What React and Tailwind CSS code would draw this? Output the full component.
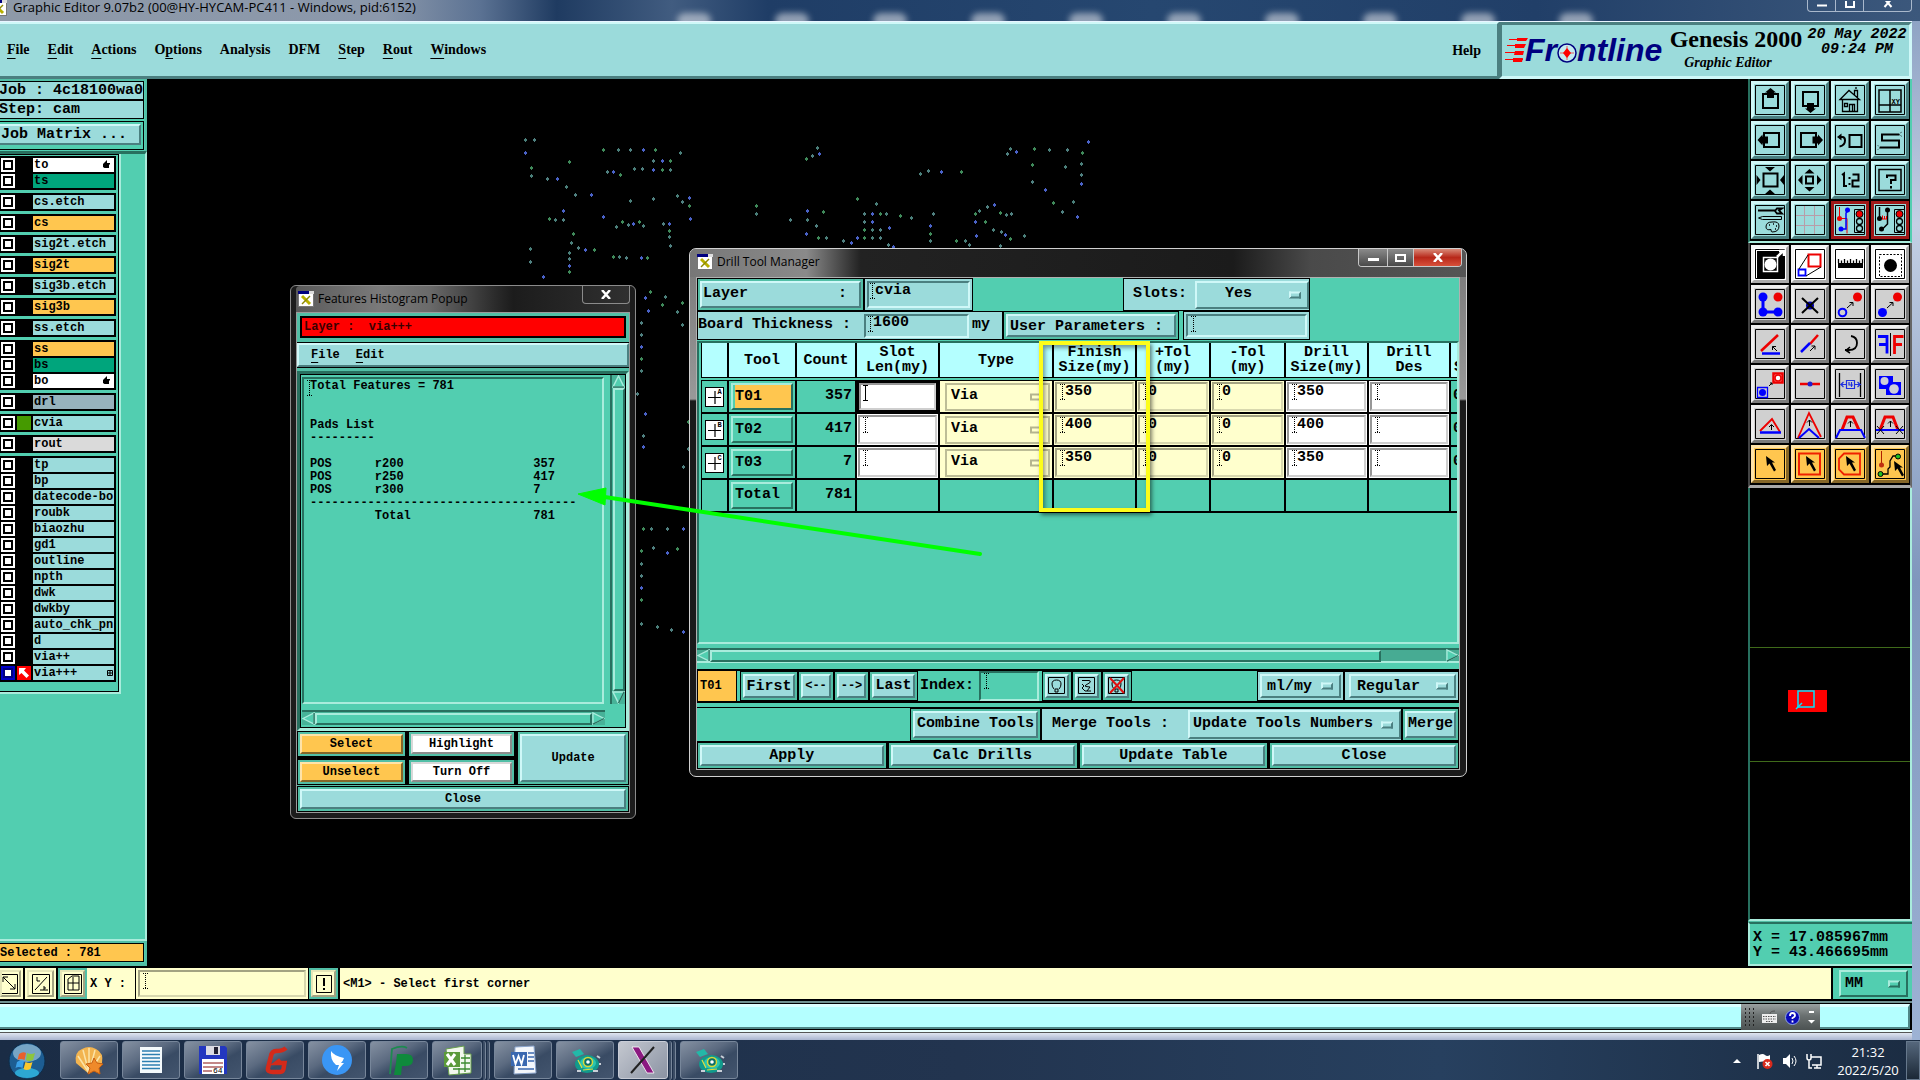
import React from "react";

const MONO = "font-['Liberation_Mono',monospace]";
const AQUA_UP = "bg-[#9bdbdb] border-2 border-t-[#cff8f8] border-l-[#cff8f8] border-b-[#4b7f80] border-r-[#4b7f80]";
const AQUA_IN = "bg-[#9bdbdb] border-2 border-t-[#4b7f80] border-l-[#4b7f80] border-b-[#cff8f8] border-r-[#cff8f8]";
const TEAL_UP = "bg-[#52ceb0] border-2 border-t-[#a9ecdc] border-l-[#a9ecdc] border-b-[#28705f] border-r-[#28705f]";
const TEAL_IN = "bg-[#52ceb0] border-2 border-t-[#28705f] border-l-[#28705f] border-b-[#a9ecdc] border-r-[#a9ecdc]";
const AMBER_UP = "bg-[#ffc64f] border-2 border-t-[#ffe3a8] border-l-[#ffe3a8] border-b-[#856628] border-r-[#856628]";
const WHITE_UP = "bg-white border-2 border-t-[#d8d8d8] border-l-[#d8d8d8] border-b-[#8c8c8c] border-r-[#8c8c8c]";
const CREAM_IN = "bg-[#ffffcd] border-2 border-t-[#a3a382] border-l-[#a3a382] border-b-[#d8d8ae] border-r-[#d8d8ae]";
const WHITE_IN = "bg-white border-2 border-t-[#979797] border-l-[#979797] border-b-[#cfcfcf] border-r-[#cfcfcf]";

/* ---------- small shared pieces ---------- */

function WinIcon() {
  return (
    <svg width="16" height="16" viewBox="0 0 16 16" className="shrink-0">
      <rect x="0.5" y="0.5" width="15" height="15" fill="#fff" stroke="#777" />
      <rect x="0" y="0" width="11" height="3" fill="#00007f" />
      <rect x="11" y="0" width="5" height="3" fill="#ddd" />
      <path d="M4 5l8 8" stroke="#b8b000" strokeWidth="3" />
      <path d="M12 5l-8 8" stroke="#8c8800" strokeWidth="1.4" />
    </svg>
  );
}

function Caret({ solid }) {
  return (
    <svg width="5" height="16" viewBox="0 0 5 16" className="shrink-0">
      <path
        d="M0 .5h5M2.5 0v16M0 15.5h5"
        stroke="#000"
        fill="none"
        strokeDasharray={solid ? undefined : "1 1"}
      />
    </svg>
  );
}

function Knob({ tone = "aqua" }) {
  const tones = {
    aqua: "border-t-[#cff8f8] border-l-[#cff8f8] border-b-[#4b7f80] border-r-[#4b7f80]",
    teal: "border-t-[#a9ecdc] border-l-[#a9ecdc] border-b-[#28705f] border-r-[#28705f]",
    cream: "border-[#b5b58f]",
  };
  return <span className={`pointer-events-none absolute right-[6px] top-1/2 h-[7px] w-[12px] -translate-y-1/2 border-2 ${tones[tone]}`} />;
}

function Picker({ label, value, className, tone, pad = "pl-2" }) {
  return (
    <span className={`relative flex ${className}`}>
      <select aria-label={label} defaultValue={value} className={`w-full appearance-none bg-transparent outline-none ${pad}`}>
        <option>{value}</option>
      </select>
      <Knob tone={tone} />
    </span>
  );
}

function Field({ label, value = "", className, solid }) {
  return (
    <label className={`flex min-w-0 items-start ${className}`}>
      <Caret solid={solid} />
      <input aria-label={label} defaultValue={value} className="h-[16px] w-full min-w-0 bg-transparent outline-none" />
    </label>
  );
}

function Arrow({ dir }) {
  const d = {
    up: ["M7 1L13 13H1Z", "M13 13H1"],
    down: ["M7 13L1 1H13Z", "M7 13L13 1"],
    left: ["M1 7L13 1V13Z", "M13 1V13"],
    right: ["M13 7L1 1V13Z", "M13 7L1 13"],
  }[dir];
  return (
    <button aria-label={`Scroll ${dir}`} className="h-[13px] w-[13px] shrink-0">
      <svg viewBox="0 0 14 14" className="h-full w-full">
        <path d={d[0]} fill="#52ceb0" stroke="#a9ecdc" strokeWidth="1.5" />
        <path d={d[1]} stroke="#28705f" strokeWidth="1.5" />
      </svg>
    </button>
  );
}

/* ---------- header ---------- */

function TitleBar() {
  return (
    <div className="flex h-[21px] items-start justify-between overflow-hidden bg-[linear-gradient(90deg,#8e99a8_0%,#8b98ab_20%,#5b7293_25%,#1f3b61_29%,#415c80_35%,#1f3d66_40%,#264770_60%,#213f68_80%,#3c587c_100%)]">
      <div className="flex items-start gap-1 font-['Open_Sans','Noto_Sans',sans-serif] text-[13px] leading-[15px] text-black">
        <span className="-ml-[9px]"><WinIcon /></span>
        <span className="whitespace-nowrap pl-[2px]">Graphic Editor 9.07b2 (00@HY-HYCAM-PC411 - Windows, pid:6152)</span>
      </div>
      <div className="hidden flex-1 items-end justify-center gap-16 self-stretch pl-12 lg:flex">
        {[0, 1, 2, 3, 4, 5, 6, 7, 8, 9].map((i) => (
          <span key={i} className="-mb-2 h-[16px] w-[34px] rounded-full bg-[#dcdfe6]/60 blur-[3px]" />
        ))}
      </div>
      <div className="mr-2 flex h-[12px] rounded-b-[4px] border border-t-0 border-[#a9b8cc] text-white">
        {["Minimize", "Maximize", "Close"].map((n, i) => (
          <button key={n} aria-label={n} className={`flex h-full items-center justify-center ${i === 2 ? "w-[47px]" : "w-[28px] border-r border-[#a9b8cc]"}`}>
            <svg width="12" height="10" viewBox="0 0 12 10" fill="none" stroke="#fff" strokeWidth="2">
              <path d={["M1 4.5h10", "M2 0v6h8v-6", "M2.5 -2l7 8M9.500 -2l-7 8"][i]} />
            </svg>
          </button>
        ))}
      </div>
    </div>
  );
}

function Logo() {
  return (
    <div className="flex shrink-0 items-center" aria-label="Frontline" role="img">
      <svg width="162" height="42" viewBox="0 -8 162 42">
        <g stroke="#f00" strokeWidth="1">
          <path d="M4 2.500h18M2 8.500h18M0 15.500h18M0 22.500h18" />
        </g>
        <g fill="#f00">
          <path d="M12 1h11l-2 3h-9zM10 7h11l-2 4h-9zM10 14h9l-1 4h-9zM8 21h10l-1 4h-9z" />
        </g>
        <text x="20" y="24" fontFamily="Liberation Sans" fontWeight="bold" fontStyle="italic" fontSize="32" fill="#000080">Fr</text>
        <circle cx="62" cy="16" r="9" fill="#c4ecf0" stroke="#000080" strokeWidth="1.500" />
        <path d="M62 11l4 5-4 5-4-5z" fill="#f00" />
        <path d="M62 9v14M55 16h14" stroke="#f00" strokeWidth="0.6" />
        <text x="72" y="24" fontFamily="Liberation Sans" fontWeight="bold" fontStyle="italic" fontSize="32" fill="#000080">ntline</text>
      </svg>
    </div>
  );
}

const MENU = [["F", "ile"], ["E", "dit"], ["A", "ctions"], ["", "Options", 1], ["", "Analysis"], ["", "DFM"], ["S", "tep"], ["R", "out"], ["W", "indows"]];

function Header() {
  return (
    <header className="flex h-[58px] border-t border-[#e8f4ff] bg-[#9bdbdb] font-['Liberation_Serif',serif] text-black">
      <nav className="flex flex-1 items-center justify-between border-2 border-b-[3px] border-l-0 border-t-[#cff8f8] border-r-[#4b7f80] border-b-[#4b7f80] pl-[7px] pr-[16px] text-[14px] font-bold">
        <div className="flex gap-[18px]">
          {MENU.map(([u, rest]) => (
            <button key={u + rest} className="leading-5">
              {u ? <span className="underline underline-offset-4">{u}</span> : null}
              {rest === "Options" ? <>O<span className="underline underline-offset-4">p</span>tions</> : rest}
            </button>
          ))}
        </div>
        <button>Help</button>
      </nav>
      <div className="flex w-[413px] border-[3px] border-t-[#4b7f80] border-l-[#4b7f80] border-b-[#cff8f8] border-r-[#cff8f8] pl-[3px]">
        <div className="pt-1"><Logo /></div>
        <div className="flex w-[138px] shrink-0 flex-col items-center">
          <h1 className="whitespace-nowrap text-[24px] font-bold leading-[28px]">Genesis 2000</h1>
          <p className="whitespace-nowrap pr-4 text-[14px] font-bold italic leading-5">Graphic Editor</p>
        </div>
        <div className={`${MONO} flex-1 whitespace-nowrap pt-[2px] text-center text-[15px] font-bold italic leading-[15px]`}>
          <p>20 May 2022</p>
          <p>09:24 PM</p>
        </div>
      </div>
    </header>
  );
}

/* ---------- left column ---------- */

const C = { w: "bg-white", g: "bg-[#00a57c]", a: "bg-[#9bdbdb]", o: "bg-[#ffc64f]", d: "bg-[#97b3bd]", r: "bg-[#dadada]" };
const GROUPS = [
  [["to", C.w, "hand"], ["ts", C.g]],
  [["cs.etch", C.a]],
  [["cs", C.o]],
  [["sig2t.etch", C.a]],
  [["sig2t", C.o]],
  [["sig3b.etch", C.a]],
  [["sig3b", C.o]],
  [["ss.etch", C.a]],
  [["ss", C.o], ["bs", C.g], ["bo", C.w, "hand"]],
  [["drl", C.d]],
  [["cvia", C.a, "green"]],
  [["rout", C.r]],
  [["tp", C.a], ["bp", C.a], ["datecode-bo", C.a], ["roubk", C.a], ["biaozhu", C.a], ["gd1", C.a], ["outline", C.a], ["npth", C.a], ["dwk", C.a], ["dwkby", C.a], ["auto_chk_pnl", C.a], ["d", C.a], ["via++", C.a], ["via+++", C.a, "work"]],
];

function LayerRow({ name, bg, mark }) {
  const on = mark === "work";
  return (
    <li className="flex h-[14px]">
      <label className="flex w-[14px] shrink-0">
        <input
          type="checkbox"
          aria-label={`Show ${name}`}
          className={`h-[14px] w-[14px] appearance-none border-2 ${on ? "border-[#0000c8] bg-white outline outline-2 -outline-offset-4 outline-[#000080]" : "border-white bg-white outline outline-2 -outline-offset-4 outline-black"}`}
        />
      </label>
      <span className="flex w-[18px] shrink-0 items-center justify-center">
        {mark === "green" ? <span className="h-full w-[14px] bg-[#459a00]" /> : null}
        {on ? (
          <svg width="14" height="14" viewBox="0 0 14 14"><path d="M0 0h14v14H0z" fill="#f00" /><path d="M2 2h7L7 4.500l5 5-2.500 2.500-5-5L2 9z" fill="#fff" /></svg>
        ) : null}
      </span>
      <button className={`${bg} flex min-w-0 flex-1 items-center justify-between overflow-hidden whitespace-nowrap pl-px text-[12px] leading-[14px]`}>
        <span>{name}</span>
        {mark === "hand" ? (
          <svg width="8" height="9" viewBox="0 0 8 9" className="mr-1 shrink-0"><path d="M1 4l4-4v3h3v1.500H7V8H2.500L1 7z" /></svg>
        ) : null}
        {on ? (
          <svg width="6" height="6" viewBox="0 0 6 6" className="mr-px shrink-0" fill="none" stroke="#000"><path d="M.5.5h5v5h-5zM3 0v6M0 3h6" /></svg>
        ) : null}
      </button>
    </li>
  );
}

function Sidebar() {
  return (
    <aside className={`${MONO} flex w-[147px] shrink-0 flex-col bg-[#52ceb0] font-bold text-black`}>
      <div className="border-r-2 border-t-2 border-[#52bfa6] pr-px pb-px text-[15px]">
        <div className="h-[19px] overflow-hidden whitespace-nowrap border border-l-0 border-black bg-[#9bdbdb] leading-[18px]"><span className="-ml-px">Job : 4c18100wa0</span></div>
        <div className="h-[19px] overflow-hidden whitespace-nowrap border border-l-0 border-black bg-[#9bdbdb] leading-[18px]"><span className="-ml-px">Step: cam</span></div>
        <div className="mt-[2px] border border-l-0 border-black p-[2px] pl-0">
          <button className={`${AQUA_UP} h-[21px] w-full border-l-0 pl-[1px] text-left leading-[18px]`}>Job Matrix ...</button>
        </div>
      </div>
      <div className="flex-1 border-b-2 border-r-2 border-t-[3px] border-b-[#a9ecdc] border-r-[#a9ecdc] border-t-[#28705f]">
        <div className="mr-[24px] border-b-2 border-r-2 border-b-[#a9ecdc] border-r-[#a9ecdc]">
          <ul className="flex flex-col gap-[3px] border-b border-r border-t border-black pb-[9px] pr-[2px] pt-px">
            {GROUPS.map((g) => (
              <li key={g[0][0]}>
                <ul className="flex flex-col gap-[2px] bg-black py-[2px] pl-px pr-[2px]">
                  {g.map(([n, bg, m]) => <LayerRow key={n} name={n} bg={bg} mark={m} />)}
                </ul>
              </li>
            ))}
          </ul>
        </div>
      </div>
      <div className="border-b-[3px] border-r-2 border-t-2 border-[#52bfa6] pb-px pr-px">
        <p className="h-[19px] border border-l-0 border-black bg-[#ffc64f] text-[12px] leading-[19px]">Selected : 781</p>
      </div>
    </aside>
  );
}

/* ---------- right tool palette: glyphs drawn on a 38px grid ---------- */

const B = "#0000ff";
const R = "#ee0000";
const K = "#000";
const light = (
  <>
    <path d="M23.500 8.500h10v23h-10z" fill="#9bdbdb" stroke={K} />
    <circle cx="28.500" cy="13" r="3.500" fill={R} stroke={K} />
    <circle cx="28.500" cy="20.500" r="3" fill="none" stroke={K} strokeWidth="1.300" />
    <circle cx="28.500" cy="27.500" r="3" fill="none" stroke={K} strokeWidth="1.300" />
  </>
);
const pointer = "M0 0l1 10 2.500-2.500 4.500 8 2-1.500-4-7.500h3z";

const TOOLS_TOP = [
  ["Pan up", <><path d="M12 13h15v14H12z" fill="none" stroke={K} strokeWidth="2" /><path d="M19.500 7l5.500 4.500h-2V17h-7v-5.500h-2z" /></>],
  ["Pan down", <><path d="M12 11h15v14H12z" fill="none" stroke={K} strokeWidth="2" /><path d="M19.500 32l5.500-4.500h-2V22h-7v5.500h-2z" /></>],
  ["Home", <path d="M9 18.500l9-9 10.500 9zM11.500 18.500v12h15v-12M18.500 30.500v-7h5v7M13.500 22.500h3v3h-3zM23.500 14V9.500h3V17M25 8V6M21.500 24v6" fill="none" stroke={K} strokeWidth="1.300" />],
  ["Panel view", <><path d="M8 9h22v22H8zM19 9v22M8 24h22" fill="none" stroke={K} strokeWidth="1.500" /><text x="20.500" y="22.500" fontSize="7" fontFamily="Liberation Mono" fontWeight="bold">XY</text></>],
  ["Pan left", <><path d="M13 12h15v14H13z" fill="none" stroke={K} strokeWidth="2" /><path d="M6.500 19l5-5.500v2H17v7h-5.500v2z" /></>],
  ["Pan right", <><path d="M10 12h15v14H10z" fill="none" stroke={K} strokeWidth="2" /><path d="M32 19l-5-5.500v2h-5.500v7H27v2z" /></>],
  ["Previous view", <><path d="M18.500 14h12v12h-12z" fill="none" stroke={K} strokeWidth="2" /><path d="M9 16h2.500q2.500 0 2.500 3.500 0 5-5.500 6" fill="none" stroke={K} strokeWidth="2" /><path d="M6 16l4.500-3.500v7z" /></>],
  ["Serpentine", <><path d="M28 13.500H11v6h17v7H9" fill="none" stroke={K} strokeWidth="2" /><path d="M28 13.500l3-3M28 13.500l3 2M9 26.500l-2-2M9 26.500l-2 2" stroke={K} strokeWidth="1" strokeDasharray="1 1" /></>],
  ["Zoom in", <><path d="M12.500 12.500h14v13h-14z" fill="none" stroke={K} strokeWidth="2" /><path d="M14 6h10l-5 4.500zM14 33h10l-5-4.500zM5.500 14v10l4-5zM33 14v10l-4-5z" /></>],
  ["Zoom out", <><path d="M15 15.500h7v7h-7z" fill="none" stroke={K} strokeWidth="2" /><path d="M13.500 12.500h10l-5-4.500zM13.500 26h10l-5 4.500zM11.500 14v10l-4.500-5zM26 14v10l4.500-5z" /></>],
  ["Scale", <path d="M11 14l2-1.500V26M15 26v-2M18.500 16v2M18.500 22v2M21.500 13.500h6v6h-6v6h7" fill="none" stroke={K} strokeWidth="2" />],
  ["Help on item", <><path d="M8 8.500h22v21H8z" fill="none" stroke={K} strokeWidth="1.500" /><path d="M16 17v-2.500h8.500V19H20v4M20 25v2.500" fill="none" stroke={K} strokeWidth="2" /></>],
  ["Display setup", <><path d="M7 9.500h17M26 7.500h5l-3 2 3 3h-5l-2-2.500z" stroke={K} strokeWidth="1.800" fill="none" /><path d="M7.500 17l4-1.500h19v3h-19z" fill="none" stroke={K} /><path d="M15 26q0-5 6-5 7-1 7 4 0 6-7 6-1 0-1-2.500-5 1-5-2.500z" fill="none" stroke={K} /><path d="M18 24h1M22 23h1M25 25h1M24 28h1" stroke={K} strokeWidth="1.500" /></>],
  ["Grid", <path d="M13.500 5v28M23.500 5v28M5 14.500h28M5 24.500h28" stroke="#b89ca8" fill="none" />],
  ["Control one", <>{light}<path d="M8.500 6v11M10 17.500h6v15" stroke={R} fill="none" /><circle cx="8.500" cy="17.500" r="2.500" fill={R} /><path d="M18 9l-3 3v16h-5" stroke={B} fill="none" strokeWidth="1.500" /><circle cx="16.500" cy="9" r="2.500" fill={B} /><circle cx="10" cy="28" r="2.500" fill={B} /></>, "red"],
  ["Control two", <>{light}<path d="M8.500 6v11M16.500 9v14l-5 5" stroke={K} fill="none" strokeWidth="1.500" /><circle cx="8.500" cy="17.500" r="2.500" /><circle cx="16.500" cy="9" r="2.500" /><circle cx="10.500" cy="28" r="2.500" /><path d="M11.500 14.500v4M11.500 18h4.500M13.500 15v3M15.500 15v3" stroke={R} /></>, "red"],
];

const TOOLS_BOTTOM = [
  ["Magnify", <><path d="M6 6h27v27H6z" /><path d="M12.500 12.500h14v14h-14z" fill={K} stroke="#fff" strokeWidth="1.500" /><circle cx="19.500" cy="19.500" r="6" fill="#fff" /><path d="M26 12l6-6M28 6h5v5" stroke="#fff" strokeWidth="2.500" fill="none" /></>, "white"],
  ["Enlarge", <><path d="M17.500 9.500h12v12h-12z" fill="none" stroke={R} strokeWidth="2" /><path d="M7.500 24.500h7v6h-7z" fill="none" stroke={B} strokeWidth="1.800" /><path d="M8 24l9-14M15 31l15-9" stroke={K} /></>, "white"],
  ["Measure", <><path d="M7 18h25v5H7z" /><path d="M7.500 14v4M10.500 15.500v3M13.500 14v4M16.500 15.500v3M19.500 14v4M22.500 15.500v3M25.500 14v4M28.500 15.500v3M31.500 14v4" stroke={K} strokeWidth="1.300" /></>, "white"],
  ["Feature select", <><path d="M8.500 9.500h22v22h-22z" fill="none" stroke={K} strokeDasharray="2 1.500" /><circle cx="19.500" cy="20.500" r="6.500" /></>, "white"],
  ["Net", <><path d="M12 12v15h15" fill="none" stroke={B} strokeWidth="3" /><circle cx="12" cy="12" r="4.500" fill={B} /><circle cx="12" cy="27" r="4.500" fill={B} /><circle cx="27" cy="27" r="4.500" fill={B} /><circle cx="27" cy="12" r="4.500" fill={R} /></>],
  ["Delete", <><circle cx="19" cy="20.500" r="4" fill="#0000b0" /><path d="M11 13l16 15M27 13L11 28" stroke={K} strokeWidth="2" /></>],
  ["Copy", <><circle cx="11.500" cy="27.500" r="3.800" fill="none" stroke={B} strokeWidth="2" /><circle cx="26.500" cy="12" r="4.500" fill={R} /><path d="M16 23l6-5.500M22 21v-3.500h-3.500" fill="none" stroke={K} /></>],
  ["Move", <><circle cx="11.500" cy="27.500" r="4.500" fill={B} /><circle cx="26.500" cy="12" r="4.500" fill={R} /><path d="M16 23l6-5.500M22 21v-3.500h-3.500" fill="none" stroke={K} /></>],
  ["Rotate", <><path d="M10 26L27 10" stroke={R} strokeWidth="2.500" /><path d="M11 28.500h18" stroke={B} strokeWidth="2.500" /><path d="M26 26l-4.500-4.500M21.500 25v-3.500h3.500" fill="none" stroke={K} /></>],
  ["Stretch line", <><path d="M19 19l8-9" stroke={R} strokeWidth="2.500" /><path d="M10 27l9-9" stroke={B} strokeWidth="2.500" /><path d="M19 26l5-5M24 24.500V21h-3.500" fill="none" stroke={K} /></>],
  ["Undo", <><path d="M20 11q6 1 6 7 0 7-8 7h-4" fill="none" stroke={K} strokeWidth="1.800" /><path d="M19 22l-4 3.500 4 2.500" fill="none" stroke={K} strokeWidth="1.500" /></>],
  ["Mirror", <><path d="M7 11.500h9v17M8 19.500h8" fill="none" stroke={B} strokeWidth="2.800" /><path d="M23.500 29v-17.500h9M24 19.500h7" fill="none" stroke={R} strokeWidth="2.800" /><path d="M19.500 8v23" stroke={K} /></>],
  ["Array", <><path d="M22.500 8.500h9v9h-9z" fill="#fff" stroke={R} strokeWidth="2.500" /><circle cx="27" cy="13" r="3" fill="#fff" stroke={R} strokeWidth="1.500" /><path d="M6.500 22.500h10v10h-10z" fill="none" stroke={B} strokeWidth="1.300" /><circle cx="11.500" cy="27.500" r="3.500" fill={B} /><path d="M18 21l3-3M21 20v-2h-2" stroke={K} fill="none" /></>],
  ["Join", <><path d="M9 19h20" stroke={R} strokeWidth="2.500" /><circle cx="19" cy="19" r="2.500" fill="#2020d0" /></>],
  ["Resize by", <><path d="M8.500 8v24M29.500 8v24" stroke={K} strokeWidth="1.300" /><path d="M15.500 15.500h8v8h-8zM15 19.500h-5l2.500-2.500M10 19.500l2.500 2.500M24 19.500h5L26.500 17M29 19.500L26.500 22M18 17v3h4M20.500 17v5" fill="none" stroke="#2030e0" strokeWidth="1.200" /></>],
  ["Fill", <><path d="M8 11h14v6h8v13H15v-6H8z" fill={B} /><circle cx="13.500" cy="16" r="4" fill="#cfcfd8" /><circle cx="23" cy="24" r="4.800" fill="#cfcfd8" /></>],
  ["Corner", <><path d="M9 26l12-12 8 13" fill="none" stroke={R} strokeWidth="1.800" /><path d="M9 27.500h21" stroke={B} strokeWidth="2.500" /><path d="M20.500 25v-5M18 22l2.500-2.500L23 22" fill="none" stroke={K} /></>],
  ["Tall corner", <><path d="M7 33L18 8l12 24" fill="none" stroke={R} strokeWidth="1.800" /><path d="M8 33l10-9 10 9" fill="none" stroke={B} strokeWidth="2" /><path d="M18.500 21v-6M16 17.500l2.500-2.500 2.500 2.500" fill="none" stroke={K} /></>],
  ["Trapezoid", <><path d="M11 25l5-13h6l6 13" fill="none" stroke={R} strokeWidth="3" /><path d="M5 33l4-8h21l4 8" fill="none" stroke={B} strokeWidth="2" /><path d="M19.500 22v-6M17 18.500l2.500-2.500 2.500 2.500" fill="none" stroke={K} /></>],
  ["Trapezoid cut", <><path d="M9 25l5-13h8l5 13" fill="none" stroke={R} strokeWidth="3" /><path d="M5 25h28" stroke={B} strokeWidth="2" /><path d="M6 21l7 8M13 21l-7 8M25 21l7 8M32 21l-7 8M19.500 22v-6M17 18.500l2.500-2.500 2.500 2.500" fill="none" stroke={K} /></>],
  ["Select single", <path d={pointer} transform="translate(15 11)" />, "amber"],
  ["Select window", <><path d="M8 8.500h21v21H8z" fill="none" stroke="#f02000" strokeWidth="2" /><path d={pointer} transform="translate(15 11)" /></>, "amber"],
  ["Select polygon", <><path d="M13 8.500h16v21H13l-5-5v-11z" fill="none" stroke="#f02000" strokeWidth="1.800" /><path d={pointer} transform="translate(15 11)" /></>, "amber"],
  ["Select net", <><path d="M10.500 6v12" stroke="#b02000" /><circle cx="10.500" cy="20" r="2.500" fill="#c03010" /><path d="M10 29h7v-5l2-2v-6l3-5h5" fill="none" stroke={K} strokeWidth="1.300" /><circle cx="27" cy="11.500" r="2.500" fill="#20c020" stroke={K} /><circle cx="9.500" cy="29" r="2.500" fill="#20c020" stroke={K} /><path d={pointer} transform="translate(23 16)" /></>, "amber"],
];

const TOOL_TONES = {
  aqua: "bg-[#9bdbdb] border-t-[#cff8f8] border-l-[#cff8f8] border-b-[#4b7f80] border-r-[#4b7f80]",
  gray: "bg-[#d0d0d0] border-t-[#eeeeee] border-l-[#eeeeee] border-b-[#7b7b7b] border-r-[#7b7b7b]",
  white: "bg-white border-t-[#f4f4f4] border-l-[#f4f4f4] border-b-[#a9a9a9] border-r-[#a9a9a9]",
  amber: "bg-[#ffc64f] border-t-[#ffe3a8] border-l-[#ffe3a8] border-b-[#856628] border-r-[#856628]",
  red: "bg-[#9bdbdb] border-[#a01818]",
};

function ToolGrid({ tools, tone, className }) {
  return (
    <div className={`grid grid-cols-4 gap-[2px] px-px pt-[2px] ${className}`}>
      {tools.map(([name, art, t]) => (
        <button key={name} aria-label={name} className={`h-[38px] w-[38px] border-[3px] ${TOOL_TONES[t || tone]}`}>
          <svg viewBox="3 3 32 32" className="h-full w-full">
            <path d="M4.500 4.500h29v29h-29z" fill="none" stroke={K} />
            {art}
          </svg>
        </button>
      ))}
    </div>
  );
}

function RightPanel() {
  return (
    <aside className="flex w-[164px] shrink-0 flex-col bg-[#52bfa6]">
      <div className="border-b-2 border-l-2 border-r-2 border-b-[#a9ecdc] border-l-[#28705f] border-r-[#52ceb0]">
        <ToolGrid tools={TOOLS_TOP} tone="aqua" className="bg-black pb-[2px]" />
      </div>
      <div className="border-b-[3px] border-l-2 border-r-2 border-b-[#a8a8a8] border-l-[#444] border-r-[#666]">
        <ToolGrid tools={TOOLS_BOTTOM} tone="gray" className="bg-black pb-[2px]" />
      </div>
      <div className="flex flex-1 flex-col border-b-2 border-l-2 border-r-2 border-b-[#a9ecdc] border-l-[#28705f] border-r-[#a9ecdc] bg-black">
        <div className="flex-[160]" />
        <div className="flex flex-[115] items-center border-y border-[#3f6a1a]">
          <svg viewBox="0 0 160 40" className="w-full">
            <rect x="38" y="6" width="39" height="22" fill="#f00" />
            <rect x="48" y="7" width="16" height="16" fill="none" stroke="#00e5ff" strokeWidth="1.500" />
            <path d="M46 25l6-6" stroke="#00e5ff" strokeWidth="1.500" />
          </svg>
        </div>
        <div className="flex-[158]" />
      </div>
      <div className={`${MONO} mt-px h-[44px] border-b-2 border-l-2 border-t-2 border-b-[#a9ecdc] border-l-[#a9ecdc] border-t-[#28705f] bg-[#52ceb0] pl-[3px] pt-[6px] text-[15px] font-bold leading-[15px]`}>
        <p>X = 17.085967mm</p>
        <p>Y = 43.466695mm</p>
      </div>
    </aside>
  );
}

/* ---------- canvas ---------- */

const DOTS = [
  [378, 23], [387, 23], [378, 36], [384, 51], [384, 59], [400, 62], [410, 62], [422, 45], [419, 70], [428, 78], [444, 78], [456, 33], [471, 33], [483, 33], [496, 33], [508, 33], [533, 36],
  [506, 44], [515, 44], [523, 44], [487, 52], [495, 52], [506, 53], [515, 53], [523, 53], [460, 55], [466, 55], [473, 58], [530, 79], [535, 85], [542, 81], [542, 89], [483, 84], [506, 82],
  [416, 94], [402, 102], [408, 103], [416, 103], [456, 100], [475, 105], [469, 110], [481, 108], [486, 107], [492, 105], [496, 109], [516, 107], [522, 107], [522, 114], [522, 120], [523, 129], [543, 102],
  [426, 117], [424, 126], [431, 131], [438, 133], [447, 133], [422, 136], [422, 142], [422, 149], [422, 155], [383, 132], [383, 145], [396, 160], [466, 140], [472, 140], [479, 141], [494, 141], [500, 141],
  [670, 31], [665, 39], [672, 37], [659, 42], [773, 57], [781, 54], [794, 55], [814, 55], [863, 32], [860, 37], [869, 35], [887, 32], [902, 33], [920, 33], [941, 25], [935, 36], [934, 47], [934, 58], [934, 67], [885, 48], [918, 50], [885, 65], [898, 73], [906, 86], [926, 85], [915, 95], [930, 100],
  [609, 89], [609, 97], [643, 103], [660, 94], [676, 95], [660, 103], [669, 109], [659, 117], [671, 121], [679, 121], [696, 124], [704, 126], [710, 82], [729, 87],
  [717, 97], [725, 97], [733, 97], [739, 97], [717, 105], [725, 105], [717, 113], [725, 113], [733, 113], [742, 111], [717, 121], [725, 121], [733, 121], [710, 121], [753, 99], [764, 101], [786, 97], [783, 109], [783, 117], [783, 124], [741, 128], [746, 130],
  [809, 124], [818, 124], [822, 128], [829, 119], [828, 97], [832, 94], [840, 90], [847, 88], [853, 96], [859, 98], [864, 97], [828, 105], [838, 105], [846, 113], [854, 115], [858, 118], [863, 122], [877, 119], [853, 129],
  [498, 181], [503, 175], [518, 180], [494, 206], [501, 194], [515, 188], [530, 195], [494, 218], [494, 230], [494, 242], [494, 254], [490, 277], [498, 297], [535, 186], [535, 208],
  [496, 319], [496, 330], [496, 412], [504, 412], [520, 412], [536, 412], [494, 434], [494, 447], [494, 459], [494, 471], [494, 483], [494, 507], [506, 431], [520, 436], [530, 432], [510, 510], [524, 513], [536, 515],
  [541, 305], [541, 332], [536, 350],
];
const DOT_COLORS = ["#4a7f7a", "#3f8a5a", "#4a62c8", "#4f8080"];

function Drawing() {
  return (
    <svg className="absolute left-0 top-0 h-[887px] w-[1100px]" viewBox="0 0 1100 887" shapeRendering="crispEdges">
      <g transform="translate(0 37)">
        {DOTS.map(([x, y], i) => <path key={i} d={`M${x - 1} ${y}h3v2h-3zM${x} ${y - 1}h1v4h-1z`} fill={DOT_COLORS[(i * 7) % 4]} />)}
      </g>
    </svg>
  );
}

function Annotations() {
  return (
    <>
      <svg className="pointer-events-none absolute left-[431px] top-[400px] h-[90px] w-[410px]" viewBox="0 0 410 90">
        <path d="M20 17L402 75" stroke="#0f0" strokeWidth="4" strokeLinecap="round" />
        <path d="M0 15l28-6 -1 17z" fill="#0f0" stroke="#0f0" strokeLinejoin="round" />
      </svg>
      <div className="pointer-events-none absolute left-[892px] top-[262px] h-[171px] w-[111px] border-4 border-[#fdfd1a] shadow-[2px_3px_4px_rgba(0,0,0,0.5),inset_2px_3px_4px_rgba(0,0,0,0.4)]" />
    </>
  );
}

/* ---------- histogram dialog ---------- */

const HISTOGRAM = `Total Features = 781


Pads List
---------

POS      r200                  357
POS      r250                  417
POS      r300                  7
-------------------------------------
         Total                 781`;

function Framed({ className = "", children }) {
  return <div className={`flex border border-black bg-[#52bfa6] p-[2px] ${className}`}>{children}</div>;
}

function HistogramPopup() {
  return (
    <section aria-label="Features Histogram Popup" className={`${MONO} absolute left-[143px] top-[206px] flex h-[534px] w-[346px] flex-col rounded-[6px] border border-[#8b8b8b] bg-[#1c1c1c] px-[5px] pb-[5px] text-[12px] font-bold text-black`}>
      <div className="flex h-[26px] items-start justify-between rounded-t bg-[linear-gradient(90deg,#5a5a5a,#7a7a7a_25%,#6a6a6a_40%,#2a2a2a_60%,#1c1c1c_65%,#303030)]">
        <div className="flex items-center gap-[4px] pl-[2px] pt-[5px] font-['Open_Sans','Noto_Sans',sans-serif] text-[12px] font-normal leading-4"><WinIcon />Features Histogram Popup</div>
        <button aria-label="Close window" className="flex h-[18px] w-[48px] items-center justify-center rounded-b-[4px] border border-t-0 border-[#8b8b8b]">
          <svg width="10" height="9" viewBox="0 0 10 9"><path d="M1 0l8 9M9 0L1 9" stroke="#fff" strokeWidth="2.500" /></svg>
        </button>
      </div>
      <div className="flex min-h-0 flex-1 flex-col border border-[#9a9a9a] bg-[#52bfa6]">
        <div className="m-[3px] mb-[4px] border-2 border-black bg-[#f00] pl-[2px] leading-[18px] text-[#3a0000] whitespace-pre">Layer :  via+++</div>
        <div className="border-y border-black">
          <div className={`${AQUA_UP} flex h-[24px] items-center gap-[16px] pl-[12px]`}>
            <button className="leading-4"><span className="underline underline-offset-4">F</span>ile</button>
            <button className="leading-4"><span className="underline underline-offset-4">E</span>dit</button>
          </div>
        </div>
        <div className="mt-[3px] flex min-h-0 flex-1 flex-col border-[3px] border-t-[#28705f] border-l-[#28705f] border-b-[#a9ecdc] border-r-[#a9ecdc] bg-[#52ceb0]">
          <div className="flex min-h-0 flex-1 flex-col border border-black pb-[2px] pl-[1px]">
            <div className="flex min-h-0 flex-1 gap-[6px]">
              <div className={`${TEAL_IN} mt-[2px] flex flex-1 overflow-hidden pl-[3px] pt-px`}>
                <Caret />
                <pre className={`${MONO} -ml-[2px] leading-[13px]`}>{HISTOGRAM}</pre>
              </div>
              <div className="flex w-[15px] flex-col items-center border-l-2 border-[#28705f] bg-[#47b298]">
                <Arrow dir="up" />
                <div className={`${TEAL_UP} w-[12px] flex-1`} />
                <Arrow dir="down" />
              </div>
            </div>
            <div className="mr-[20px] mt-[6px] flex h-[15px] items-center border-t-2 border-[#28705f] bg-[#47b298]">
              <Arrow dir="left" />
              <div className={`${TEAL_UP} h-[12px] flex-1`} />
              <Arrow dir="right" />
            </div>
          </div>
        </div>
        <div className="grid grid-cols-[109fr_108fr_112fr] gap-[2px] bg-black">
          <div className="flex flex-col gap-[2px]">
            <Framed><button className={`${AMBER_UP} h-[20px] w-full leading-4`}>Select</button></Framed>
            <Framed><button className={`${AMBER_UP} h-[20px] w-full leading-4`}>Unselect</button></Framed>
          </div>
          <div className="flex flex-col gap-[2px]">
            <Framed><button className={`${WHITE_UP} h-[20px] w-full leading-4`}>Highlight</button></Framed>
            <Framed><button className={`${WHITE_UP} h-[20px] w-full leading-4`}>Turn Off</button></Framed>
          </div>
          <Framed><button className={`${AQUA_UP} w-full`}>Update</button></Framed>
        </div>
        <Framed className="mt-px"><button className={`${AQUA_UP} h-[20px] w-full leading-4`}>Close</button></Framed>
      </div>
    </section>
  );
}

/* ---------- drill tool manager ---------- */

const TOOLS = [
  ["A", "T01", 357, "350", "350"],
  ["B", "T02", 417, "400", "400"],
  ["C", "T03", 7, "350", "350"],
];
const COLS = ["", "Tool", "Count", "Slot\nLen(my)", "Type", "Finish\nSize(my)", "+Tol\n(my)", "-Tol\n(my)", "Drill\nSize(my)", "Drill\nDes", " \nS"];
const CELL = "border-b-2 border-r-2 border-black p-0";

function PlusIcon({ tag }) {
  return (
    <button aria-label={`Expand ${tag}`} className="mx-auto block h-[20px] w-[19px] border border-black bg-white">
      <svg viewBox="0 0 17 18" className="h-full w-full">
        <path d="M9 3v13M2 9.500h13" stroke="#000" strokeWidth="1.200" />
        <text x="11.500" y="6" fontSize="7" fontFamily="Liberation Mono" fontWeight="bold">{tag}</text>
      </svg>
    </button>
  );
}

function CellField({ label, value, tone, active }) {
  return (
    <div className={`flex h-[31px] ${active ? "bg-black p-[2px]" : tone === "cream" ? "bg-[#ffffcd] p-px" : "bg-white p-px"}`}>
      <Field label={label} value={value} solid={active} className={`w-full flex-1 ${active ? "pl-[2px]" : "pl-[3px]"} ${tone === "cream" ? CREAM_IN : WHITE_IN}`} />
    </div>
  );
}

function ToolTable() {
  return (
    <table className="w-full table-fixed border-separate border-spacing-0 whitespace-pre">
      <colgroup>
        <col className="w-[28px]" /><col className="w-[68px]" /><col className="w-[60px]" /><col className="w-[83px]" /><col className="w-[114px]" />
        <col className="w-[83px]" /><col className="w-[74px]" /><col className="w-[75px]" /><col className="w-[83px]" /><col className="w-[82px]" /><col />
      </colgroup>
      <thead>
        <tr>
          {COLS.map((c, i) => (
            <th key={i} className={`h-[35px] overflow-hidden border-b border-black bg-[#b4ffff] p-0 leading-[15px] ${i === 0 ? "border-l border-r-2" : i === 10 ? "pl-[3px] text-left" : "border-r-2"}`}>{c}</th>
          ))}
        </tr>
        <tr><td colSpan={11} className="h-[3px] border-b border-black p-0" /></tr>
      </thead>
      <tbody>
        {TOOLS.map(([tag, tool, count, size, drill], i) => (
          <tr key={tool}>
            <td className={`${CELL} border-l`}><PlusIcon tag={tag} /></td>
            <td className={`${CELL} px-[2px]`}>
              <button className={`${TEAL_UP} h-[27px] w-full pl-[2px] text-left`}><span className={`block h-full leading-[23px] ${i === 0 ? "bg-[#ffc64f]" : ""}`}>{tool}</span></button>
            </td>
            <td className={`${CELL} pr-[3px] text-right`}>{count}</td>
            <td className={CELL}><CellField label={`${tool} slot length`} active={i === 0} /></td>
            <td className={`${CELL} bg-[#ffffcd]`}>
              <div className="py-px pl-[5px] pr-[2px]"><Picker label={`${tool} type`} value="Via" tone="cream" pad="pl-1" className="h-[28px] border-2 border-[#bdbd96]" /></div>
            </td>
            <td className={CELL}><CellField label={`${tool} finish size`} value={size} tone="cream" /></td>
            <td className={CELL}><CellField label={`${tool} plus tolerance`} value="0" tone="cream" /></td>
            <td className={CELL}><CellField label={`${tool} minus tolerance`} value="0" tone="cream" /></td>
            <td className={CELL}><CellField label={`${tool} drill size`} value={drill} /></td>
            <td className={CELL}><CellField label={`${tool} drill designator`} /></td>
            <td className="overflow-hidden border-b-2 border-black p-0 pl-[2px] text-left">0</td>
          </tr>
        ))}
        <tr>
          <td className={`${CELL} border-l`} />
          <td className={`${CELL} px-[2px]`}><button className={`${TEAL_UP} my-[2px] h-[27px] w-full pl-[2px] text-left`}>Total</button></td>
          <td className={`${CELL} pr-[3px] text-right`}>781</td>
          {[3, 4, 5, 6, 7, 8, 9].map((n) => <td key={n} className={CELL} />)}
          <td className="border-b-2 border-black p-0" />
        </tr>
      </tbody>
    </table>
  );
}

function IconButton({ name, children }) {
  return (
    <Framed className="w-[30px]">
      <button aria-label={name} className={`${AQUA_UP} flex w-full items-center justify-center`}>
        <svg width="18" height="20" viewBox="0 0 18 20" fill="none" stroke="#000"><path d="M.5 1.500h16v16H.5z" />{children}</svg>
      </button>
    </Framed>
  );
}

function DrillToolManager() {
  return (
    <section aria-label="Drill Tool Manager" className={`${MONO} absolute left-[542px] top-[169px] flex h-[529px] w-[778px] flex-col rounded-[7px] border border-[#d0d0d0] bg-[linear-gradient(180deg,#777_0,#999_150px,#1a1a1a_152px)] px-[6px] pb-[6px] text-[15px] font-bold text-black`}>
      <div className="-mx-[6px] flex h-[28px] items-start justify-between rounded-t-[6px] bg-[linear-gradient(90deg,#777_0,#8a8a8a_15%,#222_22%,#1b1b1b_70%,#4a4a4a_80%,#555)] pl-[7px] pr-[4px]">
        <div className="flex items-center gap-[4px] pt-[5px] font-['Open_Sans','Noto_Sans',sans-serif] text-[12px] font-normal leading-4"><WinIcon />Drill Tool Manager</div>
        <div className="flex h-[18px] overflow-hidden rounded-b-[4px] border border-t-0 border-[#c8c8c8]">
          <button aria-label="Minimize window" className="flex w-[29px] items-center justify-center border-r border-[#c8c8c8] bg-[linear-gradient(#8a8a8a,#4a4a4a)]"><span className="mt-1 h-[3px] w-[11px] bg-white" /></button>
          <button aria-label="Maximize window" className="flex w-[26px] items-center justify-center border-r border-[#c8c8c8] bg-[linear-gradient(#8a8a8a,#4a4a4a)]"><span className="h-[8px] w-[11px] border-2 border-white" /></button>
          <button aria-label="Close window" className="flex w-[47px] items-center justify-center bg-[linear-gradient(#d98a78,#b8281a_50%,#d8503a)]"><svg width="10" height="9" viewBox="0 0 10 9"><path d="M1 0l8 9M9 0L1 9" stroke="#fff" strokeWidth="2.500" /></svg></button>
        </div>
      </div>
      <div className="flex min-h-0 flex-1 flex-col border border-[#b0b0b0] bg-[#52ceb0]">
        <div className="flex h-[33px]">
          <Framed className="w-[167px]"><button className={`${AQUA_UP} flex flex-1 items-center justify-between pl-px pr-[12px]`}><span>Layer</span><span>:</span></button></Framed>
          <div className="flex w-[109px] border border-black bg-[#9bdbdb] p-[2px]"><Field label="Layer name" value="cvia" className={`${AQUA_IN} flex-1 pl-px`} /></div>
          <div className="w-[150px]" />
          <div className="flex w-[187px] items-center gap-[8px] border border-black bg-[#9bdbdb] pl-[9px]">
            <span>Slots:</span>
            <Picker label="Slots" value="Yes" pad="pl-[28px]" className={`${AQUA_UP} h-[28px] flex-1`} />
          </div>
        </div>
        <div className="flex h-[29px]">
          <div className="flex w-[306px] items-center border border-black bg-[#9bdbdb]">
            <span className="w-[166px] whitespace-nowrap">Board Thickness :</span>
            <Field label="Board thickness" value="1600" className={`${AQUA_IN} h-[24px] w-[105px] pl-[2px]`} />
            <span className="pl-[3px]">my</span>
          </div>
          <Framed className="w-[176px]"><button className={`${AQUA_UP} flex-1 whitespace-nowrap pl-[2px] text-left`}>User Parameters :</button></Framed>
          <div className="ml-[4px] flex w-[127px] border border-black bg-[#9bdbdb] p-[2px]"><Field label="User parameters" className={`${AQUA_IN} flex-1 pl-[3px]`} /></div>
        </div>
        <div className={`${TEAL_IN} mt-px flex-1 overflow-hidden pl-[2px]`}>
          <ToolTable />
        </div>
        <div className="mt-1 flex h-[15px] items-center border-b-2 border-t-2 border-b-[#a9ecdc] border-t-[#28705f] bg-[#47ab93]">
          <Arrow dir="left" />
          <div className={`${TEAL_UP} h-[12px] w-[671px]`} />
          <span className="flex-1" />
          <Arrow dir="right" />
        </div>
        <div className="mt-[6px] flex h-[34px] border-y-2 border-black whitespace-nowrap">
          <span className="w-[40px] border-l border-r border-black bg-[#ffc64f] pl-[2px] text-[12px] leading-[30px]">T01</span>
          <Framed className="ml-[3px] w-[58px]"><button className={`${AQUA_UP} flex-1`}>First</button></Framed>
          <Framed className="w-[36px]"><button aria-label="Previous" className={`${AQUA_UP} flex flex-1 items-center justify-center text-[12px]`}>{"<--"}</button></Framed>
          <Framed className="w-[35px]"><button aria-label="Next" className={`${AQUA_UP} flex flex-1 items-center justify-center text-[12px]`}>{"-->"}</button></Framed>
          <Framed className="w-[49px]"><button className={`${AQUA_UP} flex flex-1 items-center justify-center`}>Last</button></Framed>
          <span className="w-[61px] pl-[2px] leading-[30px]">Index:</span>
          <Field label="Index" className={`${TEAL_IN} w-[60px] pl-[3px]`} />
          <div className="ml-[3px] flex">
            <IconButton name="Highlight tool"><path d="M6 13q-2-2-2-5 0-4 4.500-4t4.500 4q0 3-2 5M7 13v3h3v-3z" /></IconButton>
            <IconButton name="Refresh tool"><path d="M4 4.500h7q2 0 1 2l-4 2.500q-2 1 0 1.500l4 .5-3 4M4 8l2 2-2 2 3 3h6" /></IconButton>
            <IconButton name="Clear highlight"><path d="M6 13q-2-2-2-5 0-4 4.500-4t4.500 4q0 3-2 5M7 13v3h3v-3z" /><path d="M2 2l14 15M16 2L2 17" stroke="#e01010" strokeWidth="2" /></IconButton>
          </div>
          <span className="flex-1" />
          <div className="flex w-[87px] border border-black bg-[#9bdbdb] p-[2px]"><Picker label="Units" value="ml/my" pad="pl-[5px]" className={`${AQUA_UP} flex-1`} /></div>
          <div className="flex w-[115px] border border-black bg-[#9bdbdb] p-[2px] pl-[4px]"><Picker label="Mode" value="Regular" pad="pl-[6px]" className={`${AQUA_UP} flex-1`} /></div>
        </div>
        <div className="mt-1 flex h-[35px] justify-end border-y border-black whitespace-nowrap">
          <Framed className="w-[131px]"><button className={`${AQUA_UP} flex-1`}>Combine Tools</button></Framed>
          <div className="flex w-[361px] items-center justify-between border border-black bg-[#9bdbdb] pl-[10px]">
            <span>Merge Tools :</span>
            <Picker label="Merge tools" value="Update Tools Numbers" pad="pl-[3px]" className={`${AQUA_UP} h-[29px] w-[213px]`} />
          </div>
          <Framed className="w-[57px]"><button className={`${AQUA_UP} flex-1`}>Merge</button></Framed>
        </div>
        <div className="grid grid-cols-4 gap-px bg-black">
          {["Apply", "Calc Drills", "Update Table", "Close"].map((t) => (
            <Framed key={t}><button className={`${AQUA_UP} h-[21px] flex-1 leading-[16px]`}>{t}</button></Framed>
          ))}
        </div>
      </div>
    </section>
  );
}

/* ---------- bottom ---------- */

function CommandBar() {
  const cream = "bg-[#ffffcd] border-2 border-t-[#e6e6b8] border-l-[#e6e6b8] border-b-[#a3a382] border-r-[#a3a382]";
  const icons = [
    ["Snap off", "M3 3l12 12M3 8V3h5M15 10v5h-5"],
    ["Snap angle", "M3 16L15 3M5 3v4h3M8 16h8M11 13h2v2h-2"],
    ["Snap grid", "M4 16V5l4-3h7v14zM9 3v13M4 9h11"],
  ];
  return (
    <div className={`${MONO} flex h-[35px] border-y-2 border-black bg-[#ffffcd] text-[12px] font-bold leading-[32px]`}>
      {icons.map(([n, d], i) => (
        <div key={n} className={`flex p-[2px] ${i === 0 ? "w-[25px] border-r-2 border-black pl-0" : i === 1 ? "w-[33px] border-r-2 border-black" : "w-[29px] bg-[#52bfa6]"}`}>
          <button aria-label={n} className={`flex flex-1 items-center overflow-hidden ${i === 0 ? "justify-end pr-px" : "justify-center"} ${cream}`}>
            <svg width="18" height="20" viewBox="0 0 18 20" fill="none" stroke="#000" className="shrink-0"><path d="M.5.500h17v19H.5z" /><path d={d} /></svg>
          </button>
        </div>
      ))}
      <label htmlFor="xy" className="w-[48px] whitespace-nowrap pl-[3px]">X Y :</label>
      <div className="flex w-[173px] border-l border-black p-[2px]">
        <span className={`flex flex-1 items-start pl-[3px] pt-px ${CREAM_IN}`}><Caret /><input id="xy" className="h-[16px] w-full min-w-0 bg-transparent outline-none" /></span>
      </div>
      <div className="flex w-[31px] border-x border-black bg-[#52bfa6] p-[2px]">
        <button aria-label="Alert" className={`flex flex-1 items-center justify-center ${cream}`}>
          <svg width="16" height="18" viewBox="0 0 16 18" fill="none" stroke="#000"><path d="M.5.500h15v17H.5z" /><path d="M8 3v8M8 13v2" strokeWidth="2" /></svg>
        </button>
      </div>
      <p className="flex-1 border-l border-black pl-[3px]">{"<M1> - Select first corner"}</p>
      <div className={`flex w-[81px] border-l-2 border-black bg-[#52ceb0] p-[2px] pl-[6px] pr-[4px]`}>
        <Picker label="Display units" value="MM" tone="teal" pad="pl-1 text-[15px] leading-[22px]" className={`${TEAL_UP} flex-1`} />
      </div>
    </div>
  );
}

function MessageStrip() {
  return (
    <div className="h-[31px] border-b-2 border-t-2 border-b-[#e8ffff] border-t-[#70908f] bg-black py-px pr-[2px]">
      <div className="flex h-full justify-end border-b-2 border-r-2 border-t-[3px] border-b-[#4f8787] border-r-[#4f8787] border-t-[#dcffff] bg-[#b4ffff]">
        <div className="relative z-10 -mt-[3px] mr-[88px] flex h-[26px] w-[79px] items-center gap-[8px] bg-[linear-gradient(#9aa0a0,#6a7070_45%,#4c5252)] pl-[4px]">
          <svg width="9" height="18" viewBox="0 0 9 18"><path d="M.5 0v18M4.500 0v18M8.500 0v18" stroke="#222" strokeDasharray="2 2" /></svg>
          <svg width="15" height="14" viewBox="0 0 15 14"><path d="M8 4q0-3 5-3" stroke="#555" fill="none" /><rect y="4" width="15" height="9" fill="#eee" /><path d="M1 6.500h13M1 9h13M4 11.500h7" stroke="#555" strokeDasharray="1.500 1" /></svg>
          <svg width="15" height="15" viewBox="0 0 15 15"><circle cx="7.500" cy="7.500" r="7" fill="#0a0ab8" stroke="#8fa8e8" /><path d="M5 6q0-3 2.500-3T10 5.500Q10 7 7.500 8v1M7.500 10.500v2" stroke="#fff" strokeWidth="1.800" fill="none" /></svg>
          <svg width="7" height="14" viewBox="0 0 7 14"><path d="M1 2h5" stroke="#fff" strokeWidth="2" /><path d="M0 10h7l-3.500 3.500z" fill="#fff" /></svg>
        </div>
      </div>
    </div>
  );
}

const turtle = (
  <>
    <ellipse cx="18" cy="20" rx="12" ry="9" fill="#129a8c" />
    <ellipse cx="19" cy="19" rx="8" ry="6" fill="#2cc4b0" />
    <circle cx="19" cy="18" r="4.500" fill="#0b6f6a" stroke="#d8d838" strokeWidth="1.500" />
    <circle cx="19" cy="18" r="1.800" fill="#fff" />
    <path d="M3 8l8-3 4 5-8 3z" fill="#23b8a8" />
    <path d="M8 27h4M24 27h5M28 12l3 2M30 20h2" stroke="#c9d0d8" strokeWidth="2" />
    <path d="M9 16l4 8M14 26l10-1" stroke="#e0e040" strokeWidth="1.200" />
  </>
);

const APPS = [
  ["Shell", <><path d="M16 30L3 19Q1 8 9 5q7-4 14 0 8 4 6 14z" fill="#f2b450" /><path d="M16 29L5 12M16 29L10 6M16 29V4M16 29l6-23M16 29l11-17" stroke="#fbe3a8" strokeWidth="1.500" /><path d="M21 14l3 5 6 1-4 4 1 6-6-3-6 3 2-6-4-4 6-1z" fill="#ef8a2a" stroke="#c86010" /></>],
  ["Notepad", <><path d="M5 3h22v26H5z" fill="#f4fafc" /><path d="M7 7h18M7 10.500h18M7 14h18M7 17.500h18M7 21h18M7 24.500h18" stroke="#2c7fb0" strokeWidth="1.600" /></>],
  ["Commander", <><path d="M2 2h26l2 2v26H2z" fill="#2337c0" /><path d="M9 2h14v9H9z" fill="#dcdce4" /><path d="M17 3h4v7h-4z" fill="#223" /><path d="M5 15h22v15H5z" fill="#fff" /><path d="M6 19h20M6 23h20M6 27h9" stroke="#b06060" strokeWidth="1.300" /><text x="16" y="29" fontSize="8" fontFamily="Liberation Mono">64</text></>],
  ["G tool", <path d="M27 4q-3 3-10 3-4 0-5 5l-3 12q-1 4 5 4h7q3 0 3.500-3l1-6h-8l4-3" fill="none" stroke="#d42a1a" strokeWidth="4.500" />],
  ["Messenger", <><circle cx="16" cy="16" r="15" fill="#3a96f5" /><path d="M10 7q3 5 13 7-1 3-3 5l3 0-7 8 2-6h-3q-6-5-5-14z" fill="#fff" /></>],
  ["P tool", <><path d="M7 30L9 5q10-4 15-1" fill="none" stroke="#1d8a50" strokeWidth="1.800" /><path d="M14 10h9q7 0 7 6t-8 6h-3l-1 9h-7l2-12z" fill="#0f8a3c" /></>],
  ["Spreadsheet", <><path d="M5 5l18-3v8h7v19l-22 2z" fill="#f2f8ee" stroke="#68a04c" /><path d="M3 8h16v15H3z" fill="#5b9a3a" /><path d="M6 10l8 11M14 10l-8 11" stroke="#fff" strokeWidth="3" /><path d="M20 14h9M20 19h9M12 25h17M24 11v17M18 24v6" stroke="#3d8a30" strokeWidth="1.300" /></>, true],
  ["Word processor", <><path d="M8 3l19-1 2 27-22 1z" fill="#f4f7fb" stroke="#8aa4cc" /><path d="M4 8h16v14H4z" fill="#3a68b0" /><path d="M6 11l2.500 9 3-8 3 8L17 11" stroke="#fff" strokeWidth="1.800" fill="none" /><path d="M21 9h6M21 13h6M21 17h6M11 25h16" stroke="#3a68b0" strokeWidth="1.300" /></>],
  ["Genesis", turtle],
  ["X server", <><path d="M5 3h7l15 26h-7z" fill="#8b1a80" stroke="#fff" strokeWidth="0.800" /><path d="M27 3L4 29" stroke="#222" strokeWidth="2" /></>, true],
  ["Genesis editor", turtle],
];

function Taskbar() {
  return (
    <footer className="flex h-[40px] items-stretch bg-[linear-gradient(90deg,#1a2c45,#22344f_50%,#27405f_75%,#1b2c42)] pt-px font-['Open_Sans','Noto_Sans',sans-serif] text-white">
      <button aria-label="Start" className="flex w-[60px] items-center pl-[8px]">
        <svg width="38" height="38" viewBox="0 0 38 38">
          <circle cx="19" cy="19" r="18" fill="#1d5d92" stroke="#0e2c48" />
          <ellipse cx="19" cy="11" rx="14" ry="9" fill="#9cc4dc" opacity="0.7" />
          <ellipse cx="19" cy="31" rx="12" ry="5" fill="#35c8f0" opacity="0.7" />
          <path d="M11 12q4-3 7-1l-1.500 7q-4-2-7 0z" fill="#e8602c" />
          <path d="M19 11q4 2 8 0l-2 7q-4 2-7 0z" fill="#8cc63e" />
          <path d="M9 20q4-3 7-1l-1.500 7q-4-2-7 0z" fill="#3aa0e8" />
          <path d="M17.500 20q4 2 7 0l-2 7q-4 2-7 0z" fill="#fcc82c" />
        </svg>
      </button>
      <div className="flex gap-[4px]">
        {APPS.map(([n, art, stack], i) => (
          <div key={n} className="flex gap-px">
            <button
              aria-label={n}
              className={`flex h-[38px] items-center justify-center rounded-[3px] border ${stack ? "w-[50px]" : "w-[58px]"} ${i === 9 ? "border-[#c8ccd6] bg-[linear-gradient(135deg,#c4c8d0,#8b93a3)]" : "border-[#77869a] bg-[linear-gradient(150deg,#8591a2_0%,#5b6a80_40%,#394b64_60%,#43556e)]"}`}
            >
              <svg width="32" height="32" viewBox="0 0 32 32">{art}</svg>
            </button>
            {stack ? <><span className="w-[3px] rounded-r border-r border-[#77869a] bg-[#3b4c64]" /><span className="w-[3px] rounded-r border-r border-[#77869a] bg-[#3b4c64]" /></> : null}
          </div>
        ))}
      </div>
      <div className="ml-auto flex items-center">
        <svg width="8" height="5" viewBox="0 0 8 5"><path d="M0 5l4-4 4 4z" fill="#fff" /></svg>
        <svg width="18" height="18" viewBox="0 0 18 18" className="ml-[15px]"><path d="M2 2v15" stroke="#fff" strokeWidth="1.500" /><path d="M3 3q4-2 6 0t5 0v7q-3 1-5 0t-6 0z" fill="#fff" /><circle cx="11.500" cy="12" r="5" fill="#d82a1c" /><path d="M9.500 10l4 4M13.500 10l-4 4" stroke="#fff" strokeWidth="1.600" /></svg>
        <svg width="16" height="16" viewBox="0 0 16 16" className="ml-[8px]"><path d="M1 5h3l4-4v14l-4-4H1z" fill="#fff" /><path d="M10 5q2 3 0 6M12 3q4 5 0 10" stroke="#fff" fill="none" /></svg>
        <svg width="16" height="16" viewBox="0 0 16 16" className="ml-[8px]" fill="none" stroke="#fff" strokeWidth="1.500"><path d="M5 4h10v8H6M8 15h7M11 12v3M1 1v4q0 2 2 2t2-2V1M3 7v8h3" /></svg>
        <div className="w-[84px] pl-2 text-center text-[13px] leading-[18px]">
          <p>21:32</p>
          <p>2022/5/20</p>
        </div>
        <button aria-label="Show desktop" className="h-full w-[14px] border border-[#66788c] bg-[linear-gradient(#55677c,#1b2836)]" />
      </div>
    </footer>
  );
}

export default function App() {
  return (
    <div className="flex min-h-screen flex-col overflow-hidden bg-black">
      <TitleBar />
      <div className="flex flex-1 flex-col bg-[linear-gradient(180deg,#8ea3c4,#c3cfe4_20%,#7f97bd_55%,#9db2d4)] pr-2">
        <Header />
        <main className="flex flex-1">
          <Sidebar />
          <div className="relative min-w-0 flex-1 overflow-hidden bg-black">
            <Drawing />
            <HistogramPopup />
            <DrillToolManager />
            <Annotations />
          </div>
          <RightPanel />
        </main>
        <CommandBar />
        <MessageStrip />
        <div className="h-2 border-t border-[#555] bg-[linear-gradient(#dfe5f0,#a9b4cf)]" />
      </div>
      <Taskbar />
    </div>
  );
}
